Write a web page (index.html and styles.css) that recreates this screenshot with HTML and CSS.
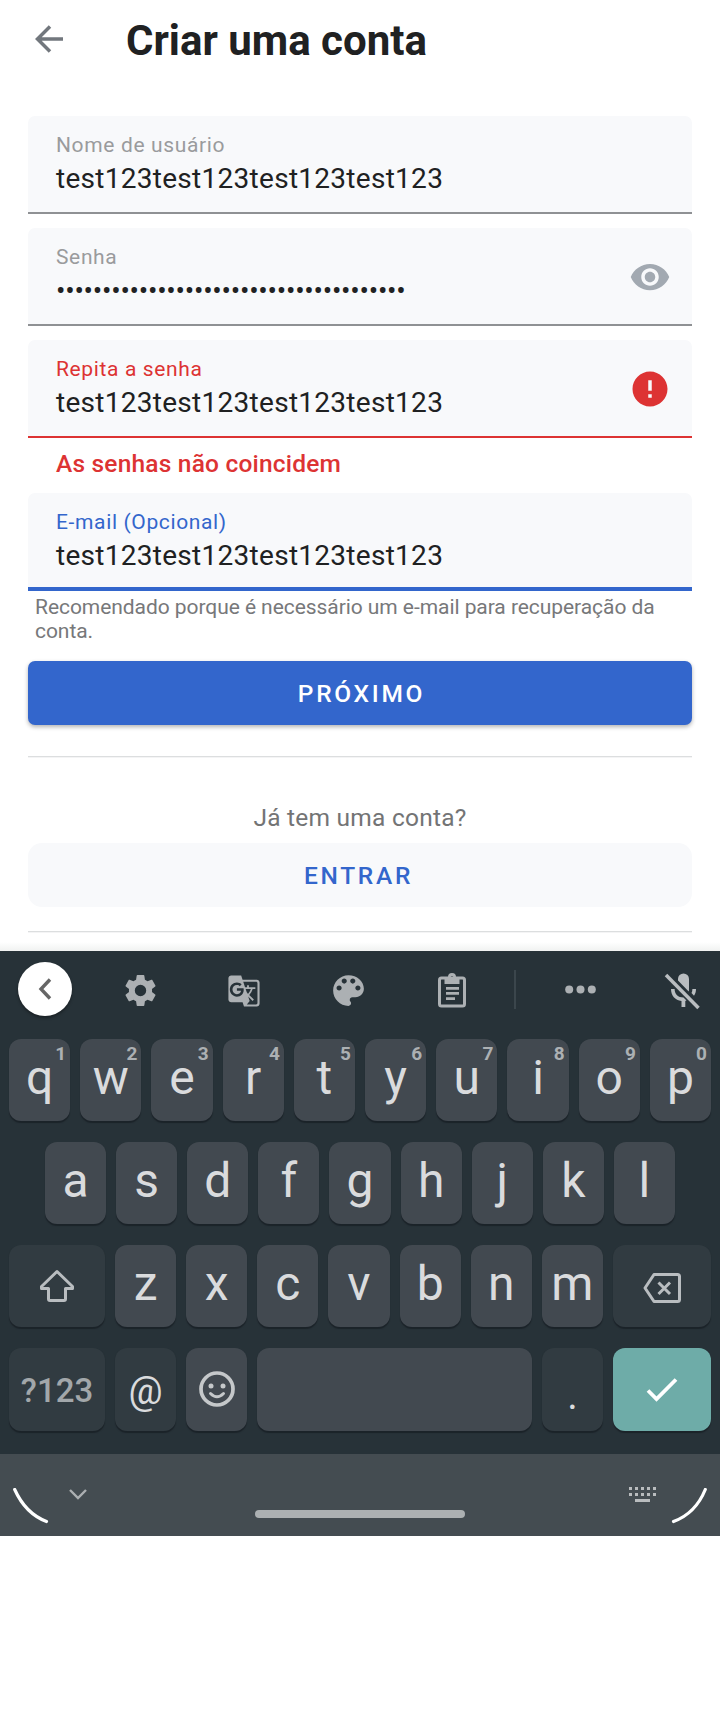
FILE: index.html
```html
<!DOCTYPE html>
<html lang="pt-BR">
<head>
<meta charset="utf-8">
<title>Criar uma conta</title>
<link rel="stylesheet" href="styles.css">
</head>
<body>
<main class="screen">
  <header class="appbar">
    <svg class="back" viewBox="0 0 28 28"><path d="M28 14H3M15 1.500L2.500 14L15 26.500" fill="none" stroke="#72777d" stroke-width="3.500"/></svg>
    <h1 class="title">Criar uma conta</h1>
  </header>
  <form class="form">
    <div class="field">
      <div class="label">Nome de usuário</div>
      <div class="value">test123test123test123test123</div>
    </div>
    <div class="field">
      <div class="label">Senha</div>
      <div class="value dots">••••••••••••••••••••••••••••••••••••••</div>
      <svg class="field-icon" viewBox="0 0 24 24"><path fill="#a2a9b1" d="M12 4.500C7 4.500 2.730 7.610 1 12c1.730 4.390 6 7.500 11 7.500s9.270-3.110 11-7.500c-1.730-4.390-6-7.500-11-7.500zM12 17c-2.760 0-5-2.240-5-5s2.240-5 5-5 5 2.240 5 5-2.240 5-5 5zm0-8c-1.660 0-3 1.340-3 3s1.340 3 3 3 3-1.340 3-3-1.340-3-3-3z"/></svg>
    </div>
    <div class="field error">
      <div class="label">Repita a senha</div>
      <div class="value">test123test123test123test123</div>
      <svg class="field-icon" viewBox="0 0 24 24"><path fill="#dd3333" d="M12 2C6.480 2 2 6.480 2 12s4.480 10 10 10 10-4.480 10-10S17.520 2 12 2zm1 15h-2v-2h2v2zm0-4h-2V7h2v6z"/></svg>
    </div>
    <div class="error-text">As senhas não coincidem</div>
    <div class="field focus">
      <div class="label">E-mail (Opcional)</div>
      <div class="value">test123test123test123test123</div>
    </div>
    <p class="helper">Recomendado porque é necessário um e-mail para recuperação da conta.</p>
    <div class="button primary">PRÓXIMO</div>
    <div class="divider"></div>
    <p class="question">Já tem uma conta?</p>
    <div class="button secondary">ENTRAR</div>
    <div class="divider last"></div>
  </form>
</main>
<section class="keyboard">
  <div class="toolbar">
    <div class="collapse"><svg width="14" height="22" viewBox="0 0 14 22"><path d="M12 1.500L3 11l9 9.500" fill="none" stroke="#666" stroke-width="3.400"/></svg></div>
    <div class="tool"><svg width="37" height="37" viewBox="0 0 24 24"><path d="M19.430 12.980c.04-.32.07-.64.07-.98s-.03-.66-.07-.98l2.110-1.650c.19-.15.24-.42.12-.64l-2-3.460c-.12-.22-.39-.3-.61-.22l-2.490 1c-.52-.4-1.080-.73-1.690-.98l-.38-2.650A.488.488 0 0 0 14 2h-4c-.25 0-.46.18-.49.42l-.38 2.650c-.61.25-1.170.59-1.690.98l-2.490-1c-.23-.09-.49 0-.61.22l-2 3.460c-.13.22-.07.49.12.64l2.110 1.650c-.04.32-.07.65-.07.98s.03.66.07.98l-2.110 1.650c-.19.15-.24.42-.12.64l2 3.460c.12.22.39.3.61.22l2.490-1c.52.4 1.080.73 1.690.98l.38 2.650c.03.24.24.42.49.42h4c.25 0 .46-.18.49-.42l.38-2.650c.61-.25 1.170-.59 1.690-.98l2.490 1c.23.09.49 0 .61-.22l2-3.460c.12-.22.07-.49-.12-.64l-2.110-1.650zM12 15.700a3.700 3.700 0 1 1 0-7.400 3.700 3.700 0 0 1 0 7.400z"/></svg></div>
    <div class="tool"><svg width="34" height="34" viewBox="0 0 24 24"><path fill-rule="evenodd" d="M21 4H11l-1-3H3c-1.100 0-2 .9-2 2v15c0 1.100.9 2 2 2h8l1 3h9c1.100 0 2-.9 2-2V6c0-1.100-.9-2-2-2zM7 16c-2.760 0-5-2.240-5-5s2.240-5 5-5c1.350 0 2.480.5 3.350 1.300L9.030 8.570c-.38-.36-1.040-.78-2.030-.78-1.740 0-3.150 1.440-3.150 3.210S5.260 14.210 7 14.210c2.010 0 2.840-1.440 2.920-2.410H7v-1.710h4.680c.07.31.12.61.12 1.020C11.800 13.970 9.890 16 7 16zm6.170-5.420h3.700c-.43 1.250-1.110 2.430-2.050 3.470-.31-.35-.6-.72-.86-1.100l-.79-2.370zm8.330 9.920c0 .55-.45 1-1 1H14l2-2.500-1.040-3.100 3.100 3.100.92-.92-3.300-3.250.02-.02c1.130-1.250 1.930-2.690 2.400-4.220H20v-1.300h-4.530V8h-1.290v1.290h-1.440L11.460 5.500h9.040c.55 0 1 .45 1 1v14z"/></svg></div>
    <div class="tool"><svg width="41" height="41" viewBox="0 0 24 24"><path d="M12 3c-4.970 0-9 4.030-9 9s4.030 9 9 9c.83 0 1.500-.67 1.500-1.500 0-.39-.15-.74-.39-1.010-.23-.26-.38-.61-.38-.99 0-.83.67-1.500 1.500-1.500H16c2.760 0 5-2.240 5-5 0-4.420-4.030-8-9-8zm-5.500 9c-.83 0-1.500-.67-1.500-1.500S5.670 9 6.500 9 8 9.670 8 10.500 7.330 12 6.500 12zm3-4C8.670 8 8 7.330 8 6.500S8.670 5 9.500 5s1.500.67 1.500 1.500S10.330 8 9.500 8zm5 0c-.83 0-1.500-.67-1.500-1.500S13.670 5 14.500 5s1.500.67 1.500 1.500S15.330 8 14.500 8zm3 4c-.83 0-1.500-.67-1.500-1.500S16.670 9 17.500 9s1.500.67 1.500 1.500-.67 1.500-1.500 1.500z"/></svg></div>
    <div class="tool"><svg width="28" height="35" viewBox="0 0 28 35"><rect x="1.500" y="5" width="25" height="28" rx="2" fill="none" stroke="#acb0b3" stroke-width="3"/><path fill-rule="evenodd" d="M6.500 4H10a4 4 0 0 1 8 0h3.500v7h-15zM14 3a1.300 1.300 0 1 0 0 2.600A1.300 1.300 0 0 0 14 3zM8 14h13v2.800H8zM8 19h13v2.800H8zM8 24.200h9V27H8z"/></svg></div>
    <div class="tool"><div class="tool-sep"></div></div>
    <div class="tool more"><svg width="31" height="9" viewBox="0 0 31 9"><circle cx="4.200" cy="4.500" r="4"/><circle cx="15.500" cy="4.500" r="4"/><circle cx="26.800" cy="4.500" r="4"/></svg></div>
    <div class="tool mic"><svg width="36" height="38" viewBox="0 0 36 38"><path fill="#b9bdc0" d="M14 8.500V7a5.500 5.500 0 0 1 11 0v10.500c0 .8-.1 1.300-.3 2zM7 17h3.600c0 5 3.500 8.500 8.900 8.500l3 3q-.7.400-1.200.5V35h-3.800v-6C11 28.200 7 23.500 7 17zM28.400 17H32c0 2.700-.7 5-2 6.800l-2.500-2.700c.6-1.200.9-2.500.9-4.100z"/><path d="M4 2L36 34.500" stroke="#273238" stroke-width="3"/><path d="M2 3L34.500 36" stroke="#b9bdc0" stroke-width="3.500"/></svg></div>
  </div>
  <div class="row ten">
    <div class="key">q<span class="hint">1</span></div><div class="key">w<span class="hint">2</span></div><div class="key">e<span class="hint">3</span></div><div class="key">r<span class="hint">4</span></div><div class="key">t<span class="hint">5</span></div><div class="key">y<span class="hint">6</span></div><div class="key">u<span class="hint">7</span></div><div class="key">i<span class="hint">8</span></div><div class="key">o<span class="hint">9</span></div><div class="key">p<span class="hint">0</span></div>
  </div>
  <div class="row nine">
    <div class="key">a</div><div class="key">s</div><div class="key">d</div><div class="key">f</div><div class="key">g</div><div class="key">h</div><div class="key">j</div><div class="key">k</div><div class="key">l</div>
  </div>
  <div class="row third">
    <div class="key dark icon"><svg width="36" height="34" viewBox="0 0 36 34"><path d="M18 2.500L2.500 17.500V19.500H9.500V30Q9.500 31.500 11 31.500H25Q26.500 31.500 26.500 30V19.500H33.500V17.500Z" fill="none" stroke="#b9bdc0" stroke-width="3" stroke-linejoin="round"/></svg></div>
    <div class="key">z</div><div class="key">x</div><div class="key">c</div><div class="key">v</div><div class="key">b</div><div class="key">n</div><div class="key">m</div>
    <div class="key dark icon delete"><svg width="38" height="30" viewBox="0 0 38 30"><path d="M11 1.500H34.500Q36.500 1.500 36.500 3.500V26.500Q36.500 28.500 34.500 28.500H11L2 15ZM15.500 9.500L27 21M27 9.500L15.500 21" fill="none" stroke="#b9bdc0" stroke-width="3" stroke-linejoin="round"/></svg></div>
  </div>
  <div class="row fourth">
    <div class="key dark symbols">?123</div>
    <div class="key dark at">@</div>
    <div class="key icon emoji"><svg width="36" height="36" viewBox="0 0 36 36"><circle cx="18" cy="18" r="16" fill="none" stroke="#c5c8ca" stroke-width="3.700"/><circle cx="12" cy="15" r="2.500" fill="#c5c8ca"/><circle cx="24" cy="15" r="2.500" fill="#c5c8ca"/><path d="M11.500 22.500Q18 29 24.500 22.500" fill="none" stroke="#c5c8ca" stroke-width="3" stroke-linecap="round"/></svg></div>
    <div class="key"></div>
    <div class="key dark period">.</div>
    <div class="key enter icon"><svg width="32" height="24" viewBox="0 0 32 24"><path d="M2 12.500L10.500 21L30 1.500" fill="none" stroke="#fff" stroke-width="3.800"/></svg></div>
  </div>
  <nav class="navbar">
    <svg class="curve" width="36" height="36" viewBox="0 0 36 36"><path d="M1.700 1.500Q12.500 25.500 33.500 33.500" fill="none" stroke="#fff" stroke-width="3.200" stroke-linecap="round"/></svg>
    <svg class="chevron" width="18" height="11" viewBox="0 0 18 11"><path d="M1 1L9 9L17 1" fill="none" stroke="#acb0b2" stroke-width="2.400"/></svg>
    <div class="pill"></div>
    <svg class="switch" width="27" height="15" viewBox="0 0 27 15"><path d="M0 1.500H27M0 7.500H27" stroke="#b9bcbe" stroke-width="3" stroke-dasharray="3 3"/><path d="M6 13.500H21" stroke="#b9bcbe" stroke-width="3"/></svg>
    <svg class="curve" width="36" height="36" viewBox="0 0 36 36"><path d="M34.300 1.500Q24.500 25.500 2.500 33.500" fill="none" stroke="#fff" stroke-width="3.200" stroke-linecap="round"/></svg>
  </nav>
</section>
</body>
</html>
```
FILE: styles.css
```css
* { box-sizing: border-box; }
body { margin: 0; background: #fff; font-family: Roboto, "Liberation Sans", sans-serif; color: #202122; }
p, h1 { margin: 0; }
svg { display: block; flex: none; }
.screen { height: 951px; overflow: hidden; background: linear-gradient(#fff 942px, #f0f2f1); }
.appbar { display: flex; height: 116px; padding: 0 28px; }
.back { width: 28px; height: 28px; margin: 25px 0 0 7px; }
.title { margin: 16px 0 0 63px; font-size: 42px; line-height: 50px; font-weight: 700; }
.form { display: flex; flex-direction: column; padding: 0 28px; }
.field { position: relative; height: 98px; margin-bottom: 14px; padding: 16px 28px 0; background: #f8f9fb; border-radius: 7px 7px 0 0; border-bottom: 2px solid #8f9194; }
.label { height: 26px; font-size: 21px; line-height: 26px; letter-spacing: .64px; color: #9a9b9d; }
.value { font-size: 28px; line-height: 42px; letter-spacing: .28px; white-space: nowrap; }
.dots { letter-spacing: -.25px; }
.field-icon { position: absolute; right: 21px; top: 28px; width: 42px; height: 42px; }
.error { margin-bottom: 0; border-color: #dd3333; }
.error .label { color: #dd3333; }
.error-text { height: 55px; padding: 9px 28px 0; font-size: 24.500px; line-height: 34px; font-weight: 500; letter-spacing: .2px; color: #dd3333; }
.focus { margin: 0; border-bottom: 4px solid #3366cc; }
.focus .label { color: #3366cc; }
.helper { height: 70px; padding: 4px 7px 0; font-size: 21px; line-height: 24px; letter-spacing: -.06px; color: #77787a; }
.button { height: 64px; display: flex; align-items: center; justify-content: center; font-size: 24.500px; font-weight: 500; letter-spacing: 2.700px; padding-top: 1px; }
.primary { padding-left: 3px; color: #fff; background: #3366cc; border-radius: 7px; box-shadow: 0 2px 4px rgba(0,0,0,.3); }
.divider { height: 2px; margin-top: 31px; background: linear-gradient(#dcdedf 50%, #f4f4f5 50%); }
.question { height: 85px; padding-top: 43px; text-align: center; font-size: 24.500px; line-height: 34px; letter-spacing: .23px; color: #737475; }
.secondary { padding-right: 3px; color: #3366cc; background: #f8f9fb; border-radius: 14px; }
.last { margin-top: 24px; }
.keyboard { height: 585px; background: #273238; }
.toolbar { display: grid; grid-template-columns: 88px 104px 104.500px 104px 102px 25px 105px 1fr; height: 88px; }
.collapse { width: 54px; height: 54px; margin: 11px 0 0 18px; border-radius: 50%; background: #fff; display: flex; align-items: center; justify-content: center; box-shadow: 0 2px 3px rgba(0,0,0,.35); }
.tool { display: flex; align-items: center; justify-content: center; height: 79px; fill: #acb0b3; }
.tool-sep { width: 2px; height: 39px; margin-bottom: 3px; background: #3b464c; }
.more { padding-bottom: 2px; }
.mic { padding-left: 12px; }
.row { display: grid; grid-template-rows: 100%; gap: 10px; height: 82px; margin: 0 9px 21px; }
.ten { grid-template-columns: repeat(10, 1fr); }
.nine { grid-template-columns: repeat(9, 1fr); margin: 0 45px 21px; }
.third { grid-template-columns: 96px repeat(7, 1fr) 98px; }
.fourth { grid-template-columns: 96px 61px 61px 1fr 61px 98px; height: 83px; margin-bottom: 23px; }
.key { position: relative; border-radius: 12px; background: #424950; color: #dadbdd; font-size: 48px; line-height: 78px; text-align: center; box-shadow: 0 1.500px 1px #1b2329; }
.dark { background: #313b41; }
.hint { position: absolute; right: 4px; top: 4px; font-size: 19px; line-height: 22px; font-weight: 700; color: #acb0b3; }
.icon { display: flex; align-items: center; justify-content: center; }
.symbols { font-size: 33px; line-height: 85px; font-weight: 500; color: #a2a7aa; }
.at { font-size: 38px; line-height: 87px; }
.period { font-size: 40px; line-height: 96px; }
.emoji { padding-bottom: 1px; }
.enter { background: #6eaca8; }
.delete { padding-top: 3px; }
.navbar { display: flex; height: 82px; padding: 0 13px; background: #444c51; }
.curve { margin-top: 34px; }
.chevron { margin: 35px 0 0 20px; }
.pill { width: 210px; height: 8px; margin: 56px 0 0 168px; border-radius: 4px; background: #acb0b2; }
.switch { margin: 33px 15px 0 auto; }
```
